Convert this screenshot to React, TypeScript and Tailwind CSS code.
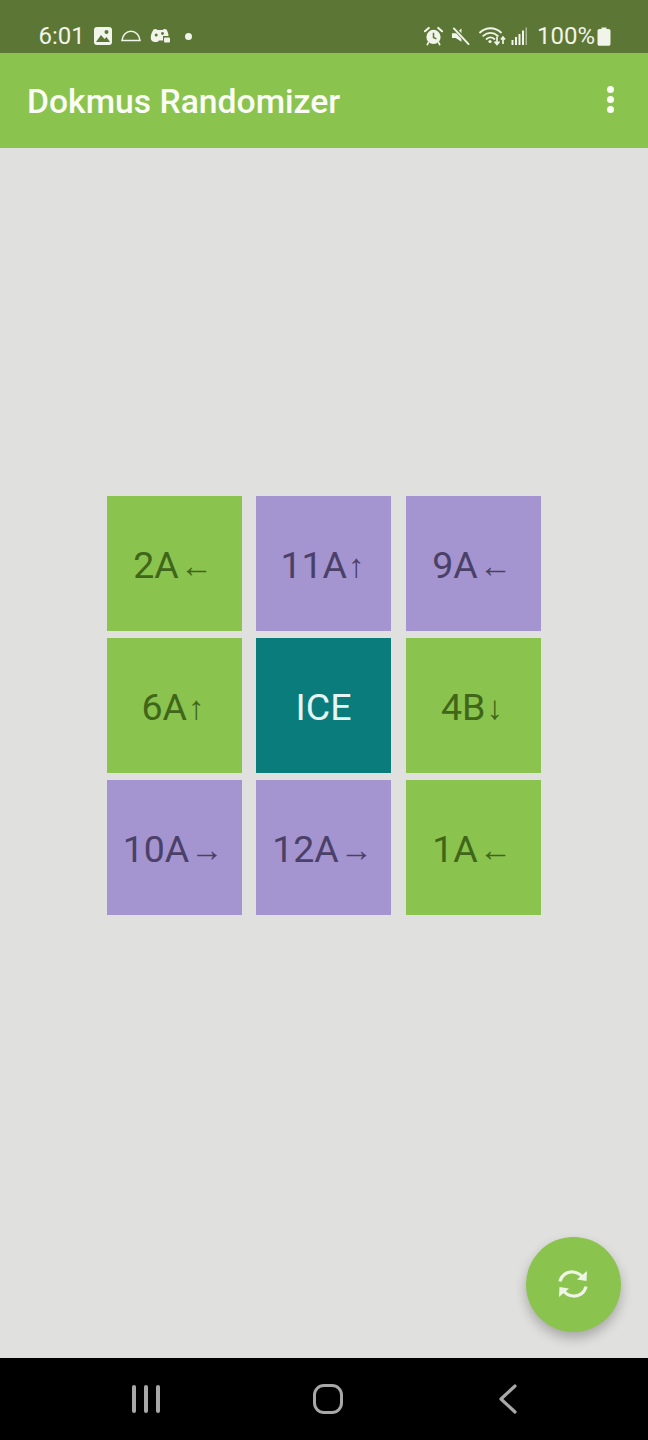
const GREEN = "bg-[#8bc34f] text-[#3f6619]";
const PURPLE = "bg-[#a495d0] text-[#4b4068]";
const TEAL = "bg-[#097c7b] text-[#e6f5f4]";

const tiles = [
  { label: "2A", arrow: "←", cls: GREEN },
  { label: "11A", arrow: "↑", cls: PURPLE },
  { label: "9A", arrow: "←", cls: PURPLE },
  { label: "6A", arrow: "↑", cls: GREEN },
  { label: "ICE", arrow: "", cls: TEAL },
  { label: "4B", arrow: "↓", cls: GREEN },
  { label: "10A", arrow: "→", cls: PURPLE },
  { label: "12A", arrow: "→", cls: PURPLE },
  { label: "1A", arrow: "←", cls: GREEN },
];

function StatusLeft() {
  return (
    <div className="flex items-center">
      <span className="text-[24px] leading-none text-[#f1f4ea] ml-[38.5px] w-[45px]">6:01</span>
      <svg width="18" height="18" viewBox="0 0 18 18" className="ml-[10px]">
        <rect x="0" y="0" width="18" height="18" rx="3" fill="#f1f4ea" />
        <circle cx="12.5" cy="5" r="2" fill="#5c7735" />
        <path d="M2 15 L7 8 L10.5 12 L12.5 10 L16 15 Z" fill="#5c7735" />
      </svg>
      <svg width="20" height="12" viewBox="0 0 20 12" className="ml-[9px]">
        <path d="M1 10.5 H19 C18.5 5 14.5 1.2 10 1.2 C5.5 1.2 1.5 5 1 10.5 Z" fill="none" stroke="#f1f4ea" strokeWidth="1.6" />
      </svg>
      <svg width="20" height="18" viewBox="0 0 20 18" className="ml-[9px]">
        <path d="M3.5 2.5 C5 1.5 6.5 2 7.5 3 H12.5 C13.5 2 15 1.5 16.5 2.5 C18 5 18.5 7 18.5 9 H13 V13.5 H9 C8 14.5 7.5 15 5.5 15 C3 15 0.8 14 0.8 10.5 C0.8 7.5 2 5 3.5 2.5 Z" fill="#f1f4ea" />
        <circle cx="6.2" cy="8" r="1.5" fill="#5c7735" />
        <circle cx="12.5" cy="6.5" r="1.4" fill="#5c7735" />
        <rect x="14" y="10.5" width="6" height="5" rx="1" fill="#f1f4ea" />
      </svg>
      <span className="ml-[15px] w-[7px] h-[7px] rounded-full bg-[#f1f4ea]" />
    </div>
  );
}

function StatusRight() {
  return (
    <div className="flex items-center">
      <svg width="19" height="20" viewBox="0 0 20 20">
        <circle cx="10" cy="11" r="7.5" fill="#f1f4ea" />
        <path d="M10 6.5 V11.5 L13 13" fill="none" stroke="#5c7735" strokeWidth="1.6" />
        <path d="M1 5 L5 1.5 M19 5 L15 1.5" stroke="#f1f4ea" strokeWidth="2.2" strokeLinecap="round" />
        <path d="M4.5 17 L3.5 19 M15.5 17 L16.5 19" stroke="#f1f4ea" strokeWidth="1.8" strokeLinecap="round" />
      </svg>
      <svg width="19" height="20" viewBox="0 0 20 20" className="ml-[8px]">
        <path d="M1 7 H5 L11 2 V16 L5 12 H1 Z" fill="#f1f4ea" />
        <path d="M3 1.5 L18.5 18" stroke="#5c7735" strokeWidth="4" />
        <path d="M3 2 L18.5 18.5" stroke="#f1f4ea" strokeWidth="2" strokeLinecap="round" />
      </svg>
      <svg width="27" height="20" viewBox="0 0 27 20" className="ml-[9px]">
        <path d="M1 6.5 C7 0.8 16 0.8 22 6.5 M4.2 9.8 C8.5 5.8 14.5 5.8 18.8 9.8 M7.6 13 C10 11 13 11 15.4 13" fill="none" stroke="#f1f4ea" strokeWidth="1.8" strokeLinecap="round" />
        <circle cx="11" cy="15.5" r="1.6" fill="#f1f4ea" />
        <path d="M18 10.5 V18 M15.5 15.5 L18 18.5 L20.5 15.5" fill="none" stroke="#f1f4ea" strokeWidth="1.7" />
        <path d="M24 18 V11.5 M22 13.5 L24 11 L26 13.5" fill="none" stroke="#f1f4ea" strokeWidth="1.7" />
      </svg>
      <svg width="17" height="18" viewBox="0 0 17 18" className="ml-[5px]">
        <rect x="0.5" y="13" width="2" height="5" fill="#f1f4ea" />
        <rect x="4" y="10" width="2" height="8" fill="#f1f4ea" />
        <rect x="7.5" y="7" width="2" height="11" fill="#f1f4ea" />
        <rect x="11" y="3.5" width="2" height="14.5" fill="#f1f4ea" />
        <rect x="14.5" y="0.5" width="1.5" height="17.5" fill="#a9b794" />
      </svg>
      <span className="ml-[9px] text-[24px] leading-none text-[#f1f4ea] w-[57px]">100%</span>
      <svg width="14" height="19" viewBox="0 0 14 19" className="ml-[3px]">
        <path d="M4.5 0.5 H9.5 V2 H11.5 C12.8 2 13.5 2.8 13.5 4 V17 C13.5 18 12.8 18.8 11.5 18.8 H2.5 C1.2 18.8 0.5 18 0.5 17 V4 C0.5 2.8 1.2 2 2.5 2 H4.5 Z" fill="#f1f4ea" />
      </svg>
    </div>
  );
}

export default function App() {
  return (
    <div className="relative w-[648px] h-[1440px] flex flex-col overflow-hidden bg-[#e0e0de] font-['Roboto',sans-serif]">
      <div className="h-[53px] shrink-0 bg-[#5c7735] flex items-end justify-between pb-[5px] pr-[37px]">
        <StatusLeft />
        <StatusRight />
      </div>

      <header className="h-[95px] shrink-0 bg-[#8bc34f] flex items-center justify-between pl-[27px] pr-[34px]">
        <h1 className="text-[33.7px] leading-none font-medium text-[#fafcf5] mt-[2px]">Dokmus Randomizer</h1>
        <div className="flex flex-col gap-[3px] mt-[-3px]">
          <span className="w-[7px] h-[7px] rounded-full bg-[#fafcf5]" />
          <span className="w-[7px] h-[7px] rounded-full bg-[#fafcf5]" />
          <span className="w-[7px] h-[7px] rounded-full bg-[#fafcf5]" />
        </div>
      </header>

      <main className="flex-1 flex justify-center pt-[348px] pr-[1px]">
        <div className="grid grid-cols-[repeat(3,135px)] auto-rows-[135px] gap-x-[14.5px] gap-y-[7px] self-start">
          {tiles.map((t, i) => (
            <div key={i} className={`flex items-center justify-center ${t.cls}`}>
              <span className="text-[37.5px] leading-none mt-[5px]">{t.label}</span>
              {t.arrow && (
                <span className="text-[33px] leading-none font-['Liberation_Serif',serif] ml-[1px] mt-[5px] mr-[2px]">{t.arrow}</span>
              )}
            </div>
          ))}
        </div>
      </main>

      <nav className="h-[82px] shrink-0 bg-black flex items-center relative">
        <div className="flex gap-[8px] ml-[132px]">
          <span className="w-[4px] h-[28px] rounded-sm bg-[#a8a8a8]" />
          <span className="w-[4px] h-[28px] rounded-sm bg-[#a8a8a8]" />
          <span className="w-[4px] h-[28px] rounded-sm bg-[#a8a8a8]" />
        </div>
        <span className="ml-[153px] w-[30px] h-[30px] rounded-[11px] border-[3.5px] border-[#a8a8a8]" />
        <svg width="20" height="30" viewBox="0 0 20 30" className="ml-[155px]">
          <path d="M17 2 L3 15 L17 28" fill="none" stroke="#a8a8a8" strokeWidth="3.2" strokeLinecap="round" strokeLinejoin="round" />
        </svg>
      </nav>

      <button className="absolute left-[526px] top-[1237px] w-[95px] h-[95px] rounded-full bg-[#8bc34f] flex items-center justify-center shadow-[0_6px_12px_rgba(0,0,0,0.25)]">
        <svg width="32" height="32" viewBox="0 0 32 32" fill="none" className="-translate-x-[1px] -translate-y-[1px]">
          <path d="M3 13.5 C4.5 7 10 3.5 16 4 C20 4.3 23 6 25.5 9" stroke="#eef5e6" strokeWidth="3.2" />
          <path d="M30 3 L29.5 13 L20 11.5 Z" fill="#eef5e6" />
          <path d="M29 18.5 C27.5 25 22 28.5 16 28 C12 27.7 9 26 6.5 23" stroke="#eef5e6" strokeWidth="3.2" />
          <path d="M2 29 L2.5 19 L12 20.5 Z" fill="#eef5e6" />
        </svg>
      </button>
    </div>
  );
}
